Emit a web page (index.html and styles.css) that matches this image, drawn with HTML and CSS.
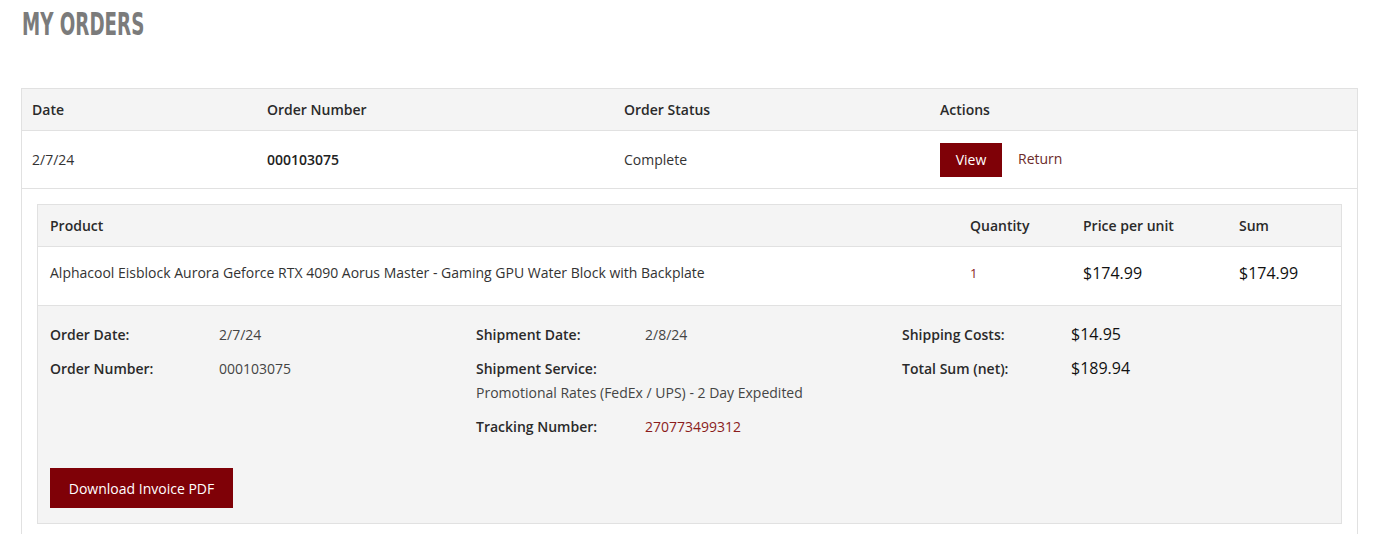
FILE: index.html
```html
<!DOCTYPE html>
<html>
<head>
<meta charset="utf-8">
<link rel="stylesheet" href="styles.css">
</head>
<body>
<div class="page">
  <h1 class="title"><span class="title-text">MY ORDERS</span></h1>
  <div class="orders">
    <div class="row head">
      <div class="c c-date">Date</div>
      <div class="c c-num">Order Number</div>
      <div class="c c-status">Order Status</div>
      <div class="c c-act">Actions</div>
    </div>
    <div class="row order">
      <div class="c c-date">2/7/24</div>
      <div class="c c-num strong">000103075</div>
      <div class="c c-status">Complete</div>
      <div class="c c-act">
        <a class="btn btn-view">View</a>
        <a class="link-return">Return</a>
      </div>
    </div>
    <div class="detail-wrap">
      <div class="detail">
        <div class="prow phead">
          <div class="p p-name">Product</div>
          <div class="p p-qty">Quantity</div>
          <div class="p p-price">Price per unit</div>
          <div class="p p-sum">Sum</div>
        </div>
        <div class="prow pitem">
          <div class="p p-name">Alphacool Eisblock Aurora Geforce RTX 4090 Aorus Master - Gaming GPU Water Block with Backplate</div>
          <div class="p p-qty qty">1</div>
          <div class="p p-price money">$174.99</div>
          <div class="p p-sum money">$174.99</div>
        </div>
        <div class="info">
          <div class="cols">
            <div class="col">
              <div class="kv"><span class="k">Order Date:</span><span class="v">2/7/24</span></div>
              <div class="kv"><span class="k">Order Number:</span><span class="v">000103075</span></div>
            </div>
            <div class="col">
              <div class="kv"><span class="k">Shipment Date:</span><span class="v">2/8/24</span></div>
              <div class="kv stack"><span class="k">Shipment Service:</span><span class="v">Promotional Rates (FedEx / UPS) - 2 Day Expedited</span></div>
              <div class="kv"><span class="k">Tracking Number:</span><span class="v track">270773499312</span></div>
            </div>
            <div class="col">
              <div class="kv"><span class="k">Shipping Costs:</span><span class="v big">$14.95</span></div>
              <div class="kv"><span class="k">Total Sum (net):</span><span class="v big">$189.94</span></div>
            </div>
          </div>
          <a class="btn btn-dl">Download Invoice PDF</a>
        </div>
      </div>
    </div>
  </div>
</div>
</body>
</html>
```
FILE: styles.css
```css
* { box-sizing: border-box; }
html, body { margin: 0; padding: 0; background: #fff; }
body {
  font-family: "Open Sans", "Noto Sans", sans-serif;
  font-size: 14px;
  color: #333;
}
.page { padding: 0 16px 0 21px; }
.title {
  margin: 0;
  padding: 6px 0 0 1px;
  height: 88px;
  font-family: "Liberation Sans Narrow", "DejaVu Sans Condensed", "Liberation Sans", sans-serif;
  font-weight: bold;
  font-size: 32px;
  line-height: 36px;
  color: #7b7b7b;
}
.title-text {
  display: inline-block;
  transform: scaleX(0.635);
  transform-origin: left center;
}
.orders {
  border: 1px solid #e1e1e1;
  border-bottom: none;
}
.row { display: flex; align-items: center; }
.row.head {
  height: 42px;
  background: #f4f4f4;
  border-bottom: 1px solid #e1e1e1;
  color: #2a2a2a;
  font-weight: 600;
}
.row.order {
  height: 58px;
  border-bottom: 1px solid #e1e1e1;
  color: #333;
}
.c { padding-left: 10px; }
.c-date { width: 235px; }
.c-num { width: 357px; }
.c-status { width: 316px; }
.c-act { flex: 1; display: flex; align-items: center; }
.strong { font-weight: 600; color: #222; }
.btn {
  display: inline-flex;
  align-items: center;
  justify-content: center;
  background: #7f0107;
  color: #fff;
  text-decoration: none;
}
.btn-view { width: 62px; height: 34px; }
.link-return { margin-left: 16px; color: #6b2a2a; margin-top: -2px; }
.detail-wrap { padding: 15px 15px 12px 15px; }
.detail {
  border: 1px solid #e1e1e1;
  background: #f4f4f4;
}
.prow { display: flex; }
.phead {
  height: 42px;
  align-items: center;
  border-bottom: 1px solid #e1e1e1;
  color: #2a2a2a;
  font-weight: 600;
}
.pitem {
  height: 59px;
  background: #fff;
  border-bottom: 1px solid #e1e1e1;
  padding-top: 16px;
  color: #333;
}
.p-name { flex: 1; padding-left: 12px; }
.p-qty { width: 113px; }
.p-price { width: 156px; }
.p-sum { width: 102px; }
.qty { color: #8b1c1c; font-size: 13px; padding-top: 1px; }
.money { font-size: 16px; color: #111; line-height: 24px; margin-top: -2px; }
.info { padding: 19px 12px 15px 12px; }
.cols { display: flex; }
.col { width: 426px; }
.col:last-child { flex: 1; }
.kv { display: flex; line-height: 20px; margin-bottom: 14px; }
.k { width: 169px; color: #2a2a2a; font-weight: 600; }
.v { color: #444; }
.kv.stack { flex-direction: column; }
.kv.stack .v { margin-top: 4px; }
.track { color: #8b1c1c; }
.big { font-size: 16px; color: #111; margin-top: -1px; }
.btn-dl {
  margin-top: 17px;
  width: 183px;
  height: 40px;
  font-size: 14px;
}
```
